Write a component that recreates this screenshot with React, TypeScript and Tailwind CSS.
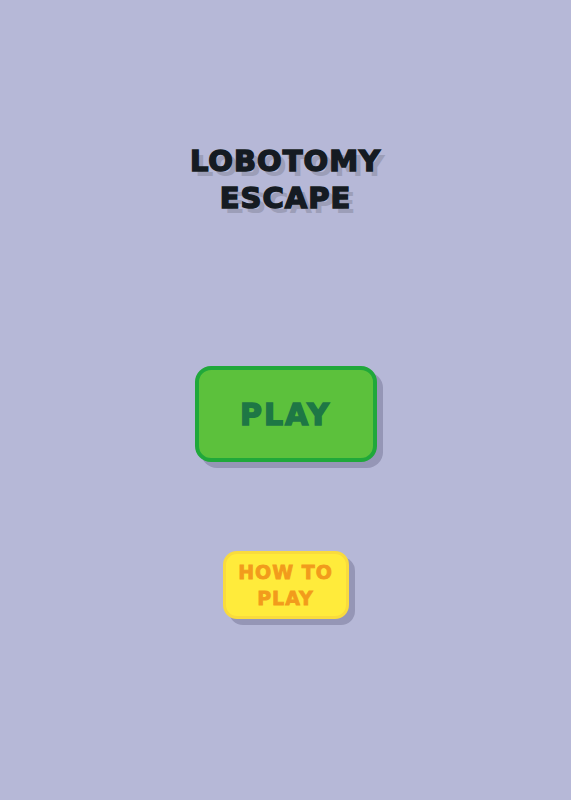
export default function App() {
  return (
    <div className="min-h-[800px] w-full bg-[#b6b8d7] flex flex-col items-center pt-[143px] font-['DejaVu_Sans','Liberation_Sans',sans-serif]">
      {/* game title */}
      <h1 className="text-center text-[29px] leading-[37px] font-bold tracking-[1px] text-[#151b22] [-webkit-text-stroke:1.5px_#151b22] [text-shadow:5px_5px_0_#9c9eb8]">
        LOBOTOMY
        <br />
        ESCAPE
      </h1>

      <button className="mt-[149px] w-[182px] h-[96px] rounded-[16px] border-[4px] border-[#20a83a] bg-[#5cc13c] shadow-[6px_6px_0_#9596b6] text-[30px] font-bold tracking-[2px] text-[#1e7745] [-webkit-text-stroke:1.5px_#1e7745]">
        PLAY
      </button>

      <button className="mt-[89px] w-[126px] h-[68px] rounded-[14px] border-[3px] border-[#f9db3c] bg-[#ffeb3b] shadow-[6px_6px_0_#9596b6] text-[19px] leading-[26px] font-bold tracking-[1px] text-[#f29b1c] [-webkit-text-stroke:0.8px_#f29b1c]">
        HOW TO
        <br />
        PLAY
      </button>
    </div>
  );
}
